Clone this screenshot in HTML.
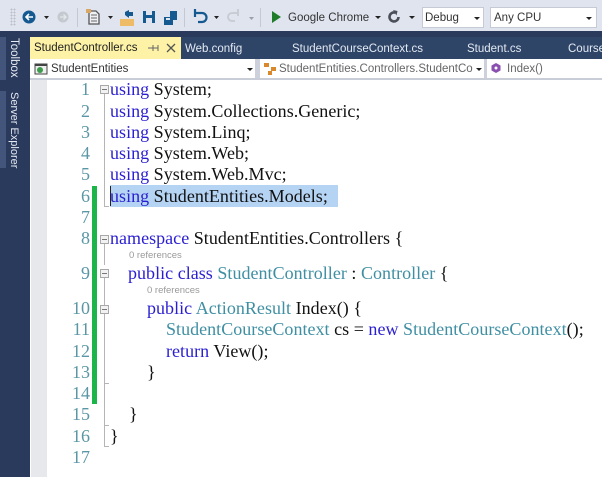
<!DOCTYPE html>
<html><head><meta charset="utf-8">
<style>
html,body{margin:0;padding:0;width:602px;height:477px;overflow:hidden;background:#fff}
#r{position:relative;width:602px;height:477px;overflow:hidden;font-family:"Liberation Sans",sans-serif;filter:blur(.3px)}
.a{position:absolute}
.t{position:absolute;white-space:pre;line-height:16px;font-size:11.500px}
.c{position:absolute;white-space:pre;font-family:"Liberation Serif",serif;font-size:18px;line-height:22px;color:#111;letter-spacing:.03px}
.n{position:absolute;width:90px;left:0;text-align:right;font-family:"Liberation Serif",serif;font-size:18px;line-height:22px;color:#5a96a6}
.k{color:#2a1fd0}.y{color:#3f8fa3}
.r{position:absolute;font-size:9.500px;line-height:12px;color:#9a9a9a;white-space:pre}
.box{position:absolute;width:7px;height:7px;border:1px solid #a8a8a8;background:#f2f2f2}
.box:after{content:"";position:absolute;left:1px;top:3px;width:5px;height:1px;background:#777}
.v{position:absolute;width:1px;background:#b5b5b5;left:104px}
.h{position:absolute;height:1px;width:5px;background:#b5b5b5;left:104px}
.dd{position:absolute;width:0;height:0;border-left:3px solid transparent;border-right:3px solid transparent;border-top:3px solid #222}
</style></head><body><div id="r">
<div class="a" style="left:0;top:0;width:602px;height:32px;background:#dfe4ef"></div>
<div class="a" style="left:0;top:31px;width:602px;height:446px;background:#2a3a5c"></div>
<div class="a" style="left:30px;top:37px;width:572px;height:22px;background:#2e4568"></div>
<div class="a" style="left:0;top:37px;width:6px;height:43px;background:#44557b"></div>
<div class="a" style="left:0;top:91px;width:6px;height:77px;background:#44557b"></div>

<!-- toolbar -->
<div class="a" style="left:10px;top:8px;width:6px;height:18px;background-image:radial-gradient(#b9bec9 1px,transparent 1px);background-size:3px 3px"></div>
<svg class="a" style="left:0;top:0" width="290" height="32" viewBox="0 0 290 32">
<circle cx="29" cy="17" r="6.500" fill="#14598f"/><path d="M33 17h-7M29 14l-3 3 3 3" stroke="#fff" stroke-width="1.600" fill="none"/>
<circle cx="63" cy="17" r="5.500" fill="#c4c8cf"/><path d="M60 17h6M63.500 14.500l2.500 2.500-2.500 2.500" stroke="#e4e7ec" stroke-width="1.300" fill="none"/>
<path d="M44 16h5l-2.500 3z" fill="#222"/>
<path d="M77.500 8v19" stroke="#c3c8d2"/>
<path d="M89 11h7l3 3v10h-10z" fill="#eef0f4" stroke="#555" stroke-width="1.300"/><path d="M91 15h6M91 18h6M91 21h6" stroke="#666"/><rect x="86" y="9" width="5" height="4" fill="#d9a866"/>
<path d="M108 16h5l-2.500 3z" fill="#222"/>
<path d="M120 19h14v7h-14z" fill="#eebb66"/><path d="M125 12l4-2v2h4v4h-4v2l-4-3z" fill="#14598f"/>
<path d="M143 11h12v12h-12z" fill="#14598f"/><rect x="146" y="11" width="6" height="4" fill="#dfe4ef"/><rect x="146" y="18" width="6" height="5" fill="#dfe4ef"/>
<path d="M164 17h9v8h-9z" fill="#14598f"/><path d="M170 11h7v9h-4v-3h-3z" fill="#14598f"/><rect x="166" y="18" width="4" height="2" fill="#dfe4ef"/>
<path d="M184.500 8v19" stroke="#c3c8d2"/>
<path d="M195 13h7a4.500 4.500 0 0 1 0 9h-4M195 9v8" stroke="#14598f" stroke-width="2.200" fill="none"/>
<path d="M214 16h5l-2.500 3z" fill="#222"/>
<path d="M238 13h-6a4 4 0 0 0 0 8h3M238 9v7" stroke="#c6cad1" stroke-width="1.800" fill="none"/>
<path d="M249 17h5l-2.500 3z" fill="#9aa0aa"/>
<path d="M260.500 8v19" stroke="#c3c8d2"/>
<path d="M272 11l9 6-9 6z" fill="#1f7d2a"/>
</svg>
<div class="t" style="left:288px;top:10px;color:#333">Google Chrome</div>
<div class="dd" style="left:375px;top:16px"></div>
<svg class="a" style="left:386px;top:9px" width="16" height="16"><path d="M12.500 8a4.500 4.500 0 1 1-3-4.300" stroke="#4a4f58" stroke-width="2.600" fill="none"/><path d="M7 1l4.500 1-1 4.500z" fill="#4a4f58"/></svg>
<div class="dd" style="left:409px;top:16px"></div>
<div class="a" style="left:422px;top:7px;width:60px;height:19px;background:#fff;border:1px solid #c5cad4"></div>
<div class="t" style="left:425px;top:10px;color:#333">Debug</div>
<div class="dd" style="left:474px;top:17px"></div>
<div class="a" style="left:490px;top:7px;width:105px;height:19px;background:#fff;border:1px solid #c5cad4"></div>
<div class="t" style="left:494px;top:10px;color:#333">Any CPU</div>
<div class="dd" style="left:586px;top:17px"></div>

<!-- tabs -->
<div class="a" style="left:30px;top:37px;width:151px;height:22px;background:#fdf2a6"></div>
<div class="t" style="left:34px;top:40px;color:#222">StudentController.cs</div>
<svg class="a" style="left:146px;top:41px" width="32" height="14"><path d="M5 7h7M7 4v6M12 4v6M2 7h3" stroke="#666" fill="none"/><path d="M21 3l8 8M29 3l-8 8" stroke="#555" stroke-width="1.300"/></svg>
<div class="t" style="left:185px;top:41px;color:#e4e9f2">Web.config</div>
<div class="t" style="left:292px;top:41px;color:#e4e9f2">StudentCourseContext.cs</div>
<div class="t" style="left:467px;top:41px;color:#e4e9f2">Student.cs</div>
<div class="t" style="left:568px;top:41px;color:#e4e9f2">Course.cs</div>

<!-- side labels -->
<div class="t" style="left:8px;top:38px;color:#e6eaf2;font-size:11.500px;transform-origin:0 0;transform:translate(14px,0) rotate(90deg)">Toolbox</div>
<div class="t" style="left:8px;top:92px;color:#e6eaf2;font-size:11px;transform-origin:0 0;transform:translate(14px,0) rotate(90deg)">Server Explorer</div>

<!-- nav bar -->
<div class="a" style="left:30px;top:59px;width:572px;height:20px;background:#fff"></div>
<div class="a" style="left:255px;top:59px;width:5px;height:20px;background:#ccd1db"></div>
<div class="a" style="left:484px;top:59px;width:3px;height:20px;background:#ccd1db"></div>
<div class="a" style="left:30px;top:78px;width:572px;height:2px;background:#c8cdd7"></div>
<svg class="a" style="left:34px;top:62px" width="15" height="14"><rect x="1" y="2" width="12" height="10" fill="#eee" stroke="#444"/><rect x="1" y="2" width="12" height="2" fill="#444"/><circle cx="6" cy="8" r="3" fill="#3c9a4c"/></svg>
<div class="t" style="left:51px;top:61px;color:#333">StudentEntities</div>
<div class="dd" style="left:247px;top:68px"></div>
<svg class="a" style="left:263px;top:61px" width="15" height="15"><rect x="1" y="2" width="5" height="4" fill="#d9892c"/><rect x="8" y="6" width="5" height="4" fill="#d9892c"/><rect x="5" y="10" width="4" height="4" fill="#d9892c"/></svg>
<div class="t" style="left:279px;top:61px;color:#666;width:196px;overflow:hidden">StudentEntities.Controllers.StudentCo</div>
<div class="dd" style="left:476px;top:68px"></div>
<svg class="a" style="left:490px;top:62px" width="12" height="12"><path d="M6 1l4.500 2.500v5L6 11 1.500 8.500v-5z" fill="#8a4fb0"/><circle cx="6" cy="6" r="1.500" fill="#fff"/></svg>
<div class="t" style="left:507px;top:61px;color:#666">Index()</div>

<!-- editor -->
<div class="a" style="left:30px;top:80px;width:572px;height:397px;background:#fff"></div>
<div class="a" style="left:31px;top:80px;width:16px;height:397px;background:#e7e8ec"></div>
<div class="a" style="left:110px;top:185px;width:228px;height:22px;background:#b5d3f3"></div>
<div class="a" style="left:110px;top:186px;width:1px;height:20px;background:#222"></div>
<div class="a" style="left:92px;top:186px;width:5px;height:218px;background:#1cb54a"></div>

<div class="n" style="top:78px">1</div>
<div class="n" style="top:100px">2</div>
<div class="n" style="top:121px">3</div>
<div class="n" style="top:142px">4</div>
<div class="n" style="top:163px">5</div>
<div class="n" style="top:185px">6</div>
<div class="n" style="top:206px">7</div>
<div class="n" style="top:227px">8</div>
<div class="n" style="top:262px">9</div>
<div class="n" style="top:297px">10</div>
<div class="n" style="top:318px">11</div>
<div class="n" style="top:340px">12</div>
<div class="n" style="top:361px">13</div>
<div class="n" style="top:382px">14</div>
<div class="n" style="top:403px">15</div>
<div class="n" style="top:425px">16</div>
<div class="n" style="top:446px">17</div>

<div class="box" style="left:100px;top:85px"></div>
<div class="v" style="top:94px;height:112px"></div><div class="h" style="top:206px"></div>
<div class="box" style="left:100px;top:235px"></div>
<div class="v" style="top:244px;height:21px"></div>
<div class="box" style="left:100px;top:269px"></div>
<div class="v" style="top:278px;height:27px"></div>
<div class="box" style="left:100px;top:305px"></div>
<div class="v" style="top:314px;height:133px"></div>
<div class="h" style="top:383px"></div><div class="h" style="top:425px"></div><div class="h" style="top:446px"></div>

<div class="c" style="left:110px;top:78px"><span class="k">using</span> System;</div>
<div class="c" style="left:110px;top:100px"><span class="k">using</span> System.Collections.Generic;</div>
<div class="c" style="left:110px;top:121px"><span class="k">using</span> System.Linq;</div>
<div class="c" style="left:110px;top:142px"><span class="k">using</span> System.Web;</div>
<div class="c" style="left:110px;top:163px"><span class="k">using</span> System.Web.Mvc;</div>
<div class="c" style="left:110px;top:185px"><span class="k">using</span> StudentEntities.Models;</div>
<div class="c" style="left:110px;top:227px"><span class="k">namespace</span> StudentEntities.Controllers {</div>
<div class="r" style="left:129px;top:250px">0 references</div>
<div class="c" style="left:128px;top:262px"><span class="k">public class</span> <span class="y">StudentController</span> : <span class="y">Controller</span> {</div>
<div class="r" style="left:147px;top:285px">0 references</div>
<div class="c" style="left:147px;top:297px"><span class="k">public</span> <span class="y">ActionResult</span> Index() {</div>
<div class="c" style="left:166px;top:318px"><span class="y">StudentCourseContext</span> cs = <span class="k">new</span> <span class="y">StudentCourseContext</span>();</div>
<div class="c" style="left:166px;top:340px"><span class="k">return</span> View();</div>
<div class="c" style="left:147px;top:361px">}</div>
<div class="c" style="left:129px;top:403px">}</div>
<div class="c" style="left:110px;top:425px">}</div>
</div></body></html>
